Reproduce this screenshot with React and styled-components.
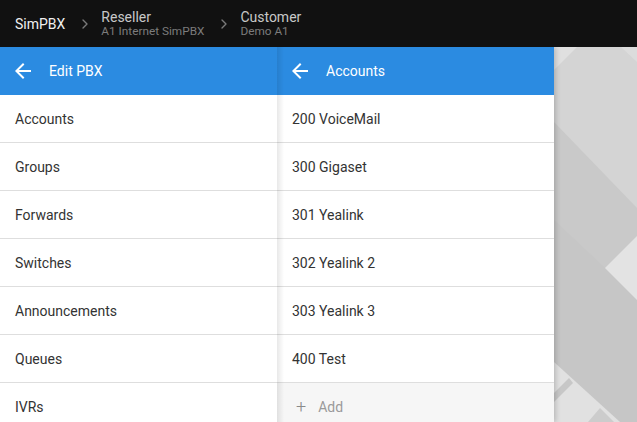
import React from 'react'
import styled, { createGlobalStyle } from 'styled-components'
import { ChevronRight } from 'lucide-react'

const GlobalStyle = createGlobalStyle`
  html, body {
    margin: 0;
    padding: 0;
    height: 100%;
    overflow: hidden;
  }
  body {
    font-family: Roboto, "Liberation Sans", sans-serif;
    background: #d3d3d3;
  }
`

const pbxMenu = ['Accounts', 'Groups', 'Forwards', 'Switches', 'Announcements', 'Queues', 'IVRs']
const accounts = ['200 VoiceMail', '300 Gigaset', '301 Yealink', '302 Yealink 2', '303 Yealink 3', '400 Test']

const BackArrow = () => (
  <svg width="24" height="24" viewBox="0 0 24 24">
    <path fill="#fff" d="M20 11H7.83l5.59-5.59L12 4l-8 8 8 8 1.41-1.41L7.83 13H20v-2z" />
  </svg>
)

const Pattern = () => (
  <PatternSvg viewBox="0 47 637 375" preserveAspectRatio="none">
    <rect x="0" y="47" width="637" height="375" fill="#d4d4d4" />
    <polygon points="554,47 577,47 554,70" fill="#e0e0e0" />
    <polygon points="621,47 637,47 637,62" fill="#dcdcdc" />
    <polygon points="554,122 637,208 637,422 554,422" fill="#c9c9c9" />
    <polygon points="554,220 605,268 637,300 637,422 554,422" fill="#c6c6c6" />
    <polygon points="605,268 637,236 637,300" fill="#e3e3e3" />
    <polygon points="554,362 620,422 554,422" fill="#e1e1e1" />
    <polygon points="554,393 569,378 573,383 554,402" fill="#c7c7c7" />
    <polygon points="588,422 600,408 614,422" fill="#cccccc" />
  </PatternSvg>
)

export default function App() {
  return (
    <Page>
      <GlobalStyle />
      <TopBar>
        <Brand>SimPBX</Brand>
        <Sep><ChevronRight size={16} strokeWidth={2} /></Sep>
        <Crumb>
          <CrumbTitle>Reseller</CrumbTitle>
          <CrumbSub>A1 Internet SimPBX</CrumbSub>
        </Crumb>
        <Sep><ChevronRight size={16} strokeWidth={2} /></Sep>
        <Crumb>
          <CrumbTitle>Customer</CrumbTitle>
          <CrumbSub>Demo A1</CrumbSub>
        </Crumb>
      </TopBar>
      <Workspace>
        <Pattern />
        <Panels>
          <Panel>
            <PanelHeader>
              <BackArrow />
              <HeaderTitle>Edit PBX</HeaderTitle>
            </PanelHeader>
            {pbxMenu.map((item) => (
              <Row key={item}>{item}</Row>
            ))}
          </Panel>
          <Panel shaded>
            <PanelHeader>
              <BackArrow />
              <HeaderTitle>Accounts</HeaderTitle>
            </PanelHeader>
            {accounts.map((item) => (
              <Row key={item}>{item}</Row>
            ))}
            <AddRow>
              <Plus>+</Plus>
              Add
            </AddRow>
          </Panel>
        </Panels>
      </Workspace>
    </Page>
  )
}

const Page = styled.div`
  width: 637px;
  height: 422px;
  display: flex;
  flex-direction: column;
  overflow: hidden;
`

const TopBar = styled.div`
  height: 47px;
  flex-shrink: 0;
  background: #111111;
  display: flex;
  align-items: center;
  padding: 0 15px;
  box-sizing: border-box;
`

const Brand = styled.div`
  color: #f0f0f0;
  font-size: 14px;
`

const Sep = styled.div`
  color: #7a7a7a;
  display: flex;
  align-items: center;
  margin: 0 8px 0 12px;
`

const Crumb = styled.div`
  display: flex;
  flex-direction: column;
`

const CrumbTitle = styled.div`
  color: #c8c8c8;
  font-size: 14px;
  line-height: 16px;
`

const CrumbSub = styled.div`
  color: #7c7c7c;
  font-size: 11.8px;
  line-height: 13px;
`

const Workspace = styled.div`
  position: relative;
  flex: 1;
  overflow: hidden;
`

const PatternSvg = styled.svg`
  position: absolute;
  inset: 0;
  width: 100%;
  height: 100%;
  display: block;
`

const Panels = styled.div`
  position: relative;
  display: flex;
  width: 554px;
  height: 100%;
  box-shadow: 2px 0 5px rgba(0, 0, 0, 0.18);
`

const Panel = styled.div`
  position: relative;
  width: 277px;
  background: #ffffff;
  display: flex;
  flex-direction: column;
  &::after {
    content: '';
    display: ${(props) => (props.shaded ? 'block' : 'none')};
    position: absolute;
    top: 0;
    bottom: 0;
    left: 0;
    width: 7px;
    background: linear-gradient(to right, rgba(0, 0, 0, 0.09), rgba(0, 0, 0, 0));
    pointer-events: none;
  }
`

const PanelHeader = styled.div`
  height: 48px;
  flex-shrink: 0;
  background: #2b8be1;
  display: flex;
  align-items: center;
  padding-left: 11px;
  box-sizing: border-box;
`

const HeaderTitle = styled.div`
  color: #ffffff;
  font-size: 14px;
  margin-left: 14px;
`

const Row = styled.div`
  height: 48px;
  flex-shrink: 0;
  box-sizing: border-box;
  border-bottom: 1px solid #dedede;
  display: flex;
  align-items: center;
  padding-left: 15px;
  font-size: 14px;
  color: #333333;
`

const AddRow = styled(Row)`
  background: #f6f6f6;
  color: #9a9a9a;
  padding-left: 19px;
  border-bottom: none;
`

const Plus = styled.span`
  font-size: 18px;
  font-weight: 300;
  color: #8a8a8a;
  margin-right: 12px;
  margin-top: -2px;
`
